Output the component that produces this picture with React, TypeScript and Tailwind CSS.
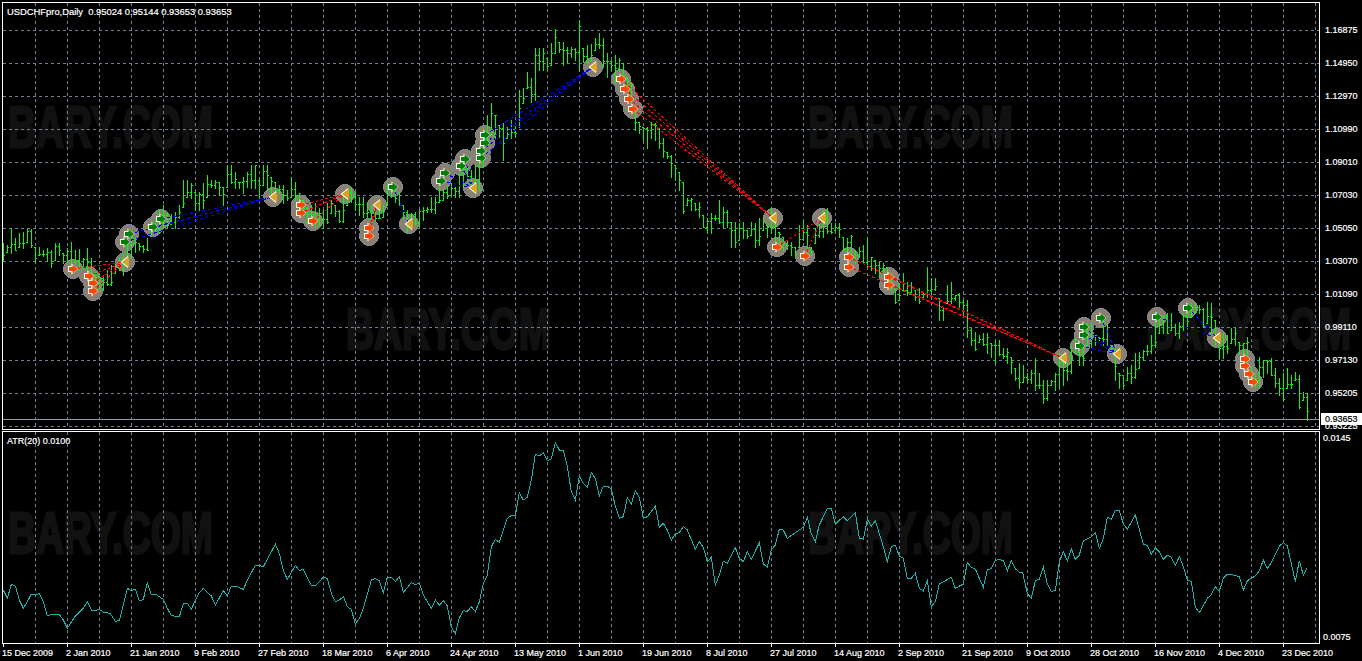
import React from "react";

const FONT = "font-['Liberation_Sans',Arial,sans-serif]";

const S: [number, number, number][] = [
[3,243,261],[7,245,252],[11,228,253],[15,238,250],[19,233,247],[23,232,248],[27,229,242],[31,229,247],[35,247,262],[39,247,255],[43,250,256],[47,248,260],[51,250,267],[55,243,260],[59,243,255],[63,253,263],[67,248,262],[71,242,273],[75,250,262],[79,249,270],[83,258,268],[87,248,277],[91,258,280],[95,272,285],[99,273,290],[103,277,290],[107,270,285],[111,265,285],[115,263,273],[119,258,270],[123,253,275],[127,242,260],[131,232,257],[135,238,252],[139,243,250],[143,245,252],[147,238,250],[151,222,235],[155,220,232],[159,210,233],[163,205,228],[167,212,227],[171,214,224],[175,212,228],[179,205,218],[183,180,207],[187,180,197],[191,183,198],[195,192,210],[199,192,210],[203,183,208],[207,175,197],[211,180,187],[215,180,188],[219,182,195],[223,187,205],[227,165,187],[231,165,183],[235,172,188],[239,182,188],[243,177,193],[247,172,187],[251,165,188],[255,165,188],[259,180,198],[263,165,185],[267,165,190],[271,177,197],[275,182,192],[279,185,193],[283,185,203],[287,190,200],[291,177,197],[295,182,200],[299,193,210],[303,200,215],[307,207,223],[311,205,222],[315,203,227],[319,208,225],[323,210,228],[327,203,223],[331,200,213],[335,205,216],[339,210,222],[343,192,222],[347,192,205],[351,187,202],[355,192,210],[359,197,215],[363,197,217],[367,202,217],[371,205,222],[375,208,220],[379,208,218],[383,205,217],[387,183,205],[391,183,197],[395,190,202],[399,192,205],[403,205,218],[407,210,232],[411,213,227],[415,212,224],[419,210,227],[423,207,220],[427,207,212],[431,197,212],[435,197,213],[439,187,202],[443,190,200],[447,186,198],[451,183,195],[455,187,197],[459,173,197],[463,160,187],[467,167,180],[471,170,188],[475,165,182],[479,157,190],[483,147,167],[487,115,143],[491,103,135],[495,115,138],[499,125,137],[503,123,160],[507,127,138],[511,120,138],[515,125,137],[519,90,127],[523,88,103],[527,72,88],[531,78,102],[535,48,100],[539,48,70],[543,48,70],[547,58,70],[551,43,65],[555,29,53],[559,42,52],[563,42,65],[567,47,63],[571,47,57],[575,48,60],[579,20,70],[583,48,62],[587,45,63],[591,44,60],[595,38,50],[599,33,48],[603,38,67],[607,53,77],[611,60,70],[615,55,83],[619,58,70],[623,63,77],[627,77,90],[631,83,103],[635,110,130],[639,122,133],[643,127,140],[647,127,148],[651,122,138],[655,123,140],[659,128,148],[663,138,157],[667,152,158],[671,155,177],[675,165,180],[679,172,190],[683,182,213],[687,198,205],[691,198,210],[695,203,210],[699,202,217],[703,215,227],[707,218,233],[711,213,233],[715,215,220],[719,200,223],[723,207,227],[727,210,227],[731,222,247],[735,222,247],[739,223,240],[743,222,238],[747,230,238],[751,222,235],[755,223,247],[759,218,245],[763,217,230],[767,225,237],[771,207,233],[775,223,240],[779,232,245],[783,237,250],[787,241,249],[791,242,255],[795,247,257],[799,225,247],[803,220,240],[807,225,253],[811,247,255],[815,228,243],[819,223,237],[823,210,237],[827,208,233],[831,223,233],[835,223,230],[839,223,237],[843,237,250],[847,238,252],[851,235,257],[855,250,263],[859,247,257],[863,245,263],[867,237,267],[871,257,270],[875,260,273],[879,262,277],[883,263,273],[887,267,283],[891,273,290],[895,287,303],[899,283,300],[903,273,290],[907,282,295],[911,282,293],[915,290,300],[919,288,303],[923,292,297],[927,267,297],[931,278,297],[935,278,290],[939,298,320],[943,307,320],[947,285,303],[951,282,303],[955,295,300],[959,293,307],[963,300,317],[967,300,337],[971,328,345],[975,332,350],[979,335,342],[983,333,345],[987,333,353],[991,343,357],[995,340,363],[999,340,355],[1003,348,358],[1007,348,363],[1011,357,373],[1015,368,380],[1019,363,388],[1023,365,382],[1027,373,382],[1031,370,383],[1035,358,390],[1039,373,388],[1043,380,403],[1047,380,400],[1051,380,385],[1055,373,390],[1059,353,388],[1063,362,385],[1067,362,380],[1071,345,373],[1075,338,352],[1079,352,365],[1083,345,365],[1087,323,345],[1091,323,347],[1095,335,345],[1099,337,340],[1103,318,345],[1107,323,345],[1111,345,353],[1115,347,380],[1119,373,388],[1123,375,387],[1127,367,380],[1131,365,383],[1135,353,378],[1139,352,368],[1143,350,360],[1147,345,355],[1151,335,353],[1155,323,347],[1159,318,333],[1163,315,333],[1167,313,333],[1171,313,330],[1175,323,335],[1179,322,338],[1183,313,330],[1187,308,327],[1191,303,317],[1195,303,312],[1199,305,313],[1203,308,327],[1207,302,323],[1211,303,333],[1215,320,345],[1219,337,358],[1223,333,358],[1227,335,353],[1231,328,343],[1235,328,345],[1239,342,353],[1243,343,353],[1247,337,367],[1251,367,383],[1255,373,387],[1259,357,387],[1263,360,377],[1267,360,373],[1271,358,375],[1275,368,387],[1279,378,395],[1283,373,400],[1287,368,388],[1291,375,388],[1295,372,380],[1299,375,408],[1303,392,400],[1307,393,420],
];

function barsPath() {
  let d = "";
  let seed = 12345;
  const rnd = () => {
    seed = (seed * 1103515245 + 12345) & 0x7fffffff;
    return seed / 0x7fffffff;
  };
  const rect = (x: number, y: number, w: number, h: number) => `M${x} ${y}h${w}v${h}h${-w}Z`;
  let prev = 250;
  for (const [x, t, b] of S) {
    const open = Math.min(b, Math.max(t, prev));
    const close = t + Math.round(rnd() * (b - t));
    d += rect(x, t, 1, b - t + 1) + rect(x - 1, open, 1, 1) + rect(x + 1, close, 1, 1);
    prev = close;
  }
  return d;
}

const ATR_SEG: [number, number[]][] = [
[0,[10,510,22,535,34,493,46,498,58,540,70,565,82,545,94,522,106,525,118,520,130,545,142,588,154,583,178,584,190,600,202,625,226,588,250,565,262,545,274,570,286,572,298,568,310,576,330,580,346,604,358,602,382,505,394,512,406,508,418,543,430,538,442,488,454,524,466,522,490,538,502,565,514,587,538,590,550,552,562,550,574,568,586,540,598,518,610,505,634,528,646,555,670,512,682,528,694,498,706,498,730,508,742,480,766,436,778,436,790,440,814,395,826,373,838,400,850,452,862,478,886,436,898,452,910,448,934,497,946,497,970,472,982,475,994,520,1006,546,1018,540]],
[340,[10,530,22,560,34,568,46,612,58,595,70,565,94,480,106,476,118,482,130,518,142,472,154,472,166,485,178,470,190,518,214,488,226,494,238,490,250,525,274,565,286,540,298,556,310,542,322,558,334,622,346,640,358,593,370,572,382,574,394,560,406,575,418,545,430,490,442,465,454,380,466,358,478,367,490,330,502,295,514,286,526,286,538,218,550,240,562,232,574,180,586,102,598,108,610,98,622,122,634,116,646,68,658,90,670,90,682,140,694,215,706,240,718,168,730,190,742,202,754,158,766,175,778,228,790,198,802,198,814,208,826,258,838,295,850,290,862,233,874,252,886,212,898,232,910,295,922,290,946,258,958,322,970,310,982,330,994,360,1006,342,1018,338]],
[680,[10,320,22,330,46,388,58,365,70,382,82,425,94,412,106,495,118,465,130,423,142,430,166,383,178,415,190,425,202,395,214,418,238,368,250,432,262,442,274,390,286,375,298,328,310,330,322,355,346,338,370,322,382,292,394,342,406,365,418,315,442,265,454,265,466,312,490,290,502,302,526,278,538,355,550,357,562,298,574,318,586,302,610,380,622,425,634,380,646,376,658,408,670,415,682,475,694,475,706,460,718,505,730,513,742,482,754,560,766,545,778,492,814,472,826,505,850,492,862,427,874,442,886,447,910,502,922,450,934,445,946,422,958,418,970,422,982,452,994,422,1006,447,1018,456]],
[1020,[8,458,22,520,34,535,46,482,58,478,70,440,82,492,94,514,106,512,118,425,130,395,142,422,154,386,166,418,178,405,190,362,214,350,226,338,238,385,250,355,262,292,274,298,286,271,298,271,310,312,322,328,346,285,370,372,382,376,394,403,406,383,418,395,430,418,442,406,454,412,466,436,478,410,490,440,502,480,514,484,526,562,538,578,562,535,574,524,586,500,598,515,610,475,622,463,634,464,658,470,670,510,682,482,706,468,718,452,730,420,742,446,754,428,778,378,790,368,802,378,826,485,838,422,850,466,860,445]],
];

function atrPoints() {
  const out: string[] = [];
  for (const [off, a] of ATR_SEG) {
    for (let i = 0; i < a.length; i += 2) {
      out.push(`${off + a[i] / 3},${420 + a[i + 1] / 3}`);
    }
  }
  return out.join(" ");
}

type P = [number, number];
const RED: P[] = [[73,269],[89,276],[93,283],[93,291],[301,205],[301,213],[313,221],[369,228],[369,236],[621,79],[625,89],[629,99],[633,109],[777,247],[805,256],[849,257],[849,267],[889,277],[889,285],[1245,359],[1245,366],[1249,374],[1253,382]];
const GREEN: P[] = [[125,242],[129,234],[153,227],[161,219],[393,187],[441,181],[445,173],[461,166],[465,159],[481,158],[481,151],[485,143],[485,135],[1080,346],[1084,335],[1084,327],[1101,318],[1157,317],[1188,308]];
const CLOSE: P[] = [[125,262],[273,197],[345,194],[377,205],[409,224],[473,188],[593,67],[773,218],[822,218],[1063,358],[1117,354],[1217,338]];

const LINKS: { c: string; from: P[]; to: P; dash: string }[] = [
  { c: "#ff0000", dash: "3 2", from: [[73,269],[89,276],[93,283],[93,291]], to: [125,262] },
  { c: "#0000ff", dash: "3 3", from: [[125,242],[129,234],[153,227],[161,219]], to: [273,197] },
  { c: "#ff0000", dash: "3 2", from: [[301,205],[301,213],[313,221]], to: [345,194] },
  { c: "#ff0000", dash: "3 2", from: [[369,228],[369,236]], to: [377,205] },
  { c: "#0000ff", dash: "3 3", from: [[393,187]], to: [409,224] },
  { c: "#0000ff", dash: "3 3", from: [[441,181],[445,173],[461,166],[465,159]], to: [473,188] },
  { c: "#0000ff", dash: "3 3", from: [[481,158],[481,151],[485,143],[485,135]], to: [593,67] },
  { c: "#ff0000", dash: "3 2", from: [[621,79],[625,89],[629,99],[633,109]], to: [773,218] },
  { c: "#ff0000", dash: "3 2", from: [[777,247],[805,256]], to: [822,218] },
  { c: "#ff0000", dash: "3 2", from: [[849,257],[849,267],[889,277],[889,285]], to: [1063,358] },
  { c: "#0000ff", dash: "3 3", from: [[1080,346],[1084,335],[1084,327],[1101,318]], to: [1117,354] },
  { c: "#0000ff", dash: "3 3", from: [[1157,317],[1188,308]], to: [1217,338] },
];

const VX = Array.from({ length: 41 }, (_, i) => 35 + 32 * i);
const HY = Array.from({ length: 13 }, (_, i) => 30 + 33 * i);
const PRICES = ["1.16875","1.14950","1.12970","1.10990","1.09010","1.07030","1.05050","1.03070","1.01090","0.99110","0.97130","0.95205","0.93225"];
const DATES = ["15 Dec 2009","2 Jan 2010","21 Jan 2010","9 Feb 2010","27 Feb 2010","18 Mar 2010","6 Apr 2010","24 Apr 2010","13 May 2010","1 Jun 2010","19 Jun 2010","8 Jul 2010","27 Jul 2010","14 Aug 2010","2 Sep 2010","21 Sep 2010","9 Oct 2010","28 Oct 2010","16 Nov 2010","4 Dec 2010","23 Dec 2010"];
const MARKS: [number, number][] = [[7,148],[807,148],[345,350],[1145,350],[7,554],[807,554]];

function Arrow({ p, fill }: { p: P; fill: string }) {
  const [x, y] = p;
  return (
    <g shapeRendering="geometricPrecision">
      <path d={`M${x - 5} ${y - 3}H${x - 1.5}V${y - 5.5}L${x + 5.5} ${y}L${x - 1.5} ${y + 5.5}V${y + 3}H${x - 5}Z`} fill="#fff" />
      <path d={`M${x - 4} ${y - 2}H${x - 0.5}V${y - 4.5}L${x + 5} ${y}L${x - 0.5} ${y + 4.5}V${y + 2}H${x - 4}Z`} fill={fill} />
    </g>
  );
}

function Tri({ p }: { p: P }) {
  const [x, y] = p;
  return (
    <g shapeRendering="geometricPrecision">
      <path d={`M${x + 3} ${y - 6}L${x - 4.5} ${y}L${x + 3} ${y + 6}Z`} fill="#fff" />
      <path d={`M${x + 4} ${y - 5.5}L${x - 3} ${y}L${x + 4} ${y + 5.5}Z`} fill="#daa520" />
    </g>
  );
}

const TEXT_WEIGHT = "[-webkit-text-stroke:0.2px]";

export default function App() {
  return (
    <div className={`relative w-[1362px] h-[661px] overflow-hidden bg-black text-white text-[9px] leading-none ${FONT} ${TEXT_WEIGHT}`}>
      <svg className="absolute inset-0" width={1362} height={661} aria-hidden="true">
        {MARKS.map(([x, y]) => (
          <text
            key={`${x}-${y}`}
            x={x + 1}
            y={y - 1}
            textLength={205}
            lengthAdjust="spacingAndGlyphs"
            fontFamily="Liberation Sans"
            fontWeight={700}
            fontSize={58}
            fill="#111111"
            stroke="#111111"
            strokeWidth={3}
          >
            BARY.COM
          </text>
        ))}
      </svg>

      <div className="relative flex flex-col pt-[2px] pl-[2px]">
        <div className="flex h-[428px]">
          <div className="relative w-[1318px] h-[428px] border border-white">
            <svg width={1316} height={426} viewBox="3 3 1316 426" className="block" shapeRendering="crispEdges">
              {VX.map((x) => (
                <line key={x} x1={x + 0.5} x2={x + 0.5} y1={3} y2={429} stroke="#708090" strokeDasharray="3 3" />
              ))}
              {HY.map((y) => (
                <line key={y} x1={3} x2={1319} y1={y + 0.5} y2={y + 0.5} stroke="#708090" strokeDasharray="3 3" />
              ))}
              <line x1={3} x2={1319} y1={419.5} y2={419.5} stroke="#8f9aa6" />
              {[...RED, ...GREEN, ...CLOSE].map(([x, y]) => (
                <circle key={`${x}-${y}`} cx={x} cy={y} r={9.5} fill="#8a8072" stroke="#7b8794" strokeWidth={1} />
              ))}
              <path d={barsPath()} fill="#00ff00" />
              {LINKS.flatMap((l, i) =>
                l.from.map(([x, y], j) => (
                  <line key={`${i}-${j}`} x1={x} y1={y} x2={l.to[0]} y2={l.to[1]} stroke={l.c} strokeDasharray={l.dash} />
                ))
              )}
              {RED.map((p) => <Arrow key={p.join()} p={p} fill="#ff4500" />)}
              {GREEN.map((p) => <Arrow key={p.join()} p={p} fill="#008000" />)}
              {CLOSE.map((p) => <Tri key={p.join()} p={p} />)}
            </svg>
            <div className="absolute left-[4px] top-[3px] h-[12px] flex items-center whitespace-pre text-[9.4px]">USDCHFpro,Daily  0.95024 0.95144 0.93653 0.93653</div>
          </div>
          <div className="relative flex-1 flex flex-col pt-[12px] pl-[5px]">
            {PRICES.map((p) => (
              <div key={p} className="h-[33px] shrink-0 flex items-center">{p}</div>
            ))}
            <div className="absolute left-px top-[411px] right-0 h-[12px] bg-white text-black flex items-center pl-[4px]">0.93653</div>
          </div>
        </div>

        <div className="flex h-[213px] mt-px">
          <div className="relative w-[1318px] h-[213px] border border-white">
            <svg width={1316} height={211} viewBox="3 432 1316 211" className="block" shapeRendering="crispEdges">
              {VX.map((x) => (
                <line key={x} x1={x + 0.5} x2={x + 0.5} y1={432} y2={643} stroke="#708090" strokeDasharray="3 3" />
              ))}
              <polyline points={atrPoints()} fill="none" stroke="#20b2aa" />
            </svg>
            <div className="absolute left-[4px] top-[3px] h-[12px] flex items-center">ATR(20) 0.0100</div>
          </div>
          <div className="flex-1 flex flex-col justify-between pl-[3px] py-px">
            <div className="h-[12px] flex items-center">0.0145</div>
            <div className="h-[12px] flex items-center">0.0075</div>
          </div>
        </div>

        <div className="flex h-[17px]">
          {DATES.map((d) => (
            <div key={d} className="w-16 shrink-0 flex flex-col">
              <div className="ml-px w-px h-[3px] bg-white" />
              <div className="mt-[2px] h-[8px] flex items-center whitespace-nowrap">{d}</div>
            </div>
          ))}
        </div>
      </div>
    </div>
  );
}
